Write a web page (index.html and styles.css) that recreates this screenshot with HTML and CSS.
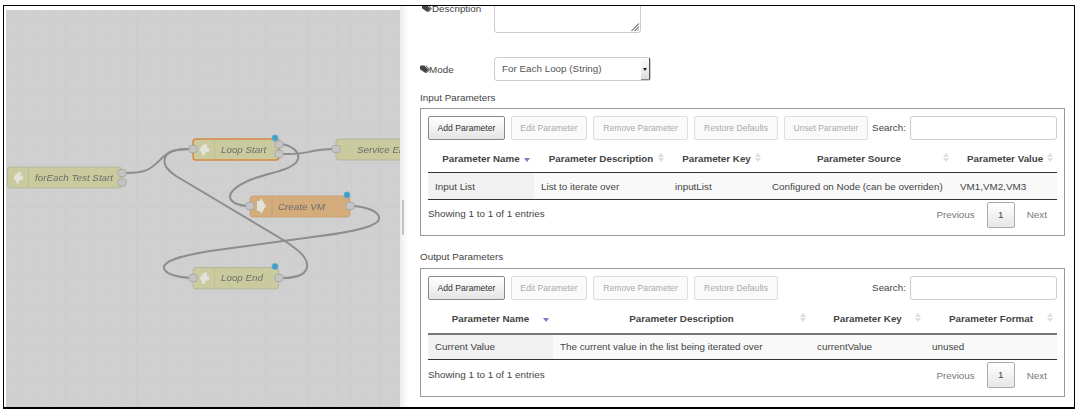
FILE: index.html
```html
<!DOCTYPE html>
<html lang="en">
<head>
  <meta charset="UTF-8">
  <title>Loop Start Node</title>
  <link rel="stylesheet" href="styles.css">
</head>
<body>

<svg class="defs" width="0" height="0">
  <defs>
    <symbol id="tags" viewBox="0 0 12 10">
      <path d="M0 1.2 1 .2h4.2l5 5-3.8 4-6.400-4.600z"/>
      <path d="M6.600.2h1l4.200 5-3.600 4-1-.2 3.400-3.800z"/>
    </symbol>
  </defs>
</svg>

<div class="frame">

  <div class="canvas">
    <svg class="flow" width="394" height="398" viewBox="6 10 394 398">
      <defs>
        <pattern id="grid" x="7.500" y="6" width="14.300" height="14.300" patternUnits="userSpaceOnUse">
          <path d="M0 0V14.300M0 0H14.300" class="grid-line"/>
        </pattern>
        <path id="blob" d="M1 6.500 3 3 7 0 9 2 8 4 11 5 10.500 8 7 9 6 12 4 12 3 9Z"/>
      </defs>
      <rect x="6" y="10" width="394" height="398" fill="url(#grid)"/>

      <!-- wires -->
      <g class="wire">
        <path d="M125 173C148 173 150 169 160 160C168 152 172 149 190 149"/>
        <path d="M282 278C298 278 308 274 307 264C306 256 298 250 285 241L176 176C166 169 163 164 165 158C167 152 174 149 190 149"/>
        <path d="M353 206C368 207 380 212 379 219C378 225 360 231 320 236L210 251C180 256 163 261 164 268C165 274 178 277 191 278"/>
        <path d="M282 144C292 146 300 152 298 159C295 170 270 172 250 180C236 186 230 192 230 197C231 203 240 206 248 206"/>
        <path d="M282 154C315 155 305 149 334 149"/>
      </g>

      <!-- forEach Test Start -->
      <g class="node">
        <rect x="7.500" y="167" width="114" height="21" rx="3"/>
        <path class="node-sep" d="M28.500 167.500V187.500"/>
        <use class="node-icon" href="#blob" x="12.500" y="171.500"/>
        <text x="35" y="181">forEach Test Start</text>
        <rect class="port" x="118" y="169.500" width="8" height="7" rx="2"/>
        <rect class="port" x="118" y="179" width="8" height="7" rx="2"/>
      </g>

      <!-- Loop Start -->
      <g class="node node-selected">
        <rect x="193" y="139" width="86" height="21" rx="3"/>
        <path class="node-sep" d="M214.500 140V159"/>
        <use class="node-icon" href="#blob" x="198.500" y="143.500"/>
        <text x="221" y="153">Loop Start</text>
        <rect class="port" x="189" y="145.500" width="8" height="7" rx="2"/>
        <rect class="port" x="275" y="141" width="8" height="7" rx="2"/>
        <rect class="port" x="275" y="150.500" width="8" height="7" rx="2"/>
        <circle class="badge" cx="275" cy="138" r="3.200"/>
      </g>

      <!-- Service End, cut off by the panel -->
      <g class="node">
        <rect x="336" y="139" width="80" height="21" rx="3"/>
        <text x="357" y="153">Service End</text>
        <rect class="port" x="332" y="145.500" width="8" height="7" rx="2"/>
      </g>

      <!-- Create VM -->
      <g class="node node-orange">
        <rect x="250" y="196" width="100" height="21" rx="3"/>
        <path class="node-sep" d="M272 196.500V216.500"/>
        <path class="node-icon" d="M257 201h3l1-3 5 8-5 8-1-3h-3z"/>
        <text x="278" y="210">Create VM</text>
        <rect class="port" x="246" y="202.500" width="8" height="7" rx="2"/>
        <rect class="port" x="346" y="202.500" width="8" height="7" rx="2"/>
        <circle class="badge" cx="347" cy="195" r="3.200"/>
      </g>

      <!-- Loop End -->
      <g class="node">
        <rect x="193" y="267.500" width="85.500" height="21.500" rx="3"/>
        <path class="node-sep" d="M214.500 268V288.500"/>
        <use class="node-icon" href="#blob" x="198.500" y="272"/>
        <text x="221" y="281">Loop End</text>
        <rect class="port" x="189" y="274.500" width="8" height="7" rx="2"/>
        <rect class="port" x="275" y="274.500" width="8" height="7" rx="2"/>
        <circle class="badge" cx="275" cy="266.500" r="3.200"/>
      </g>
    </svg>
  </div>

  <div class="panel">
    <div class="handle"></div>

    <div class="form-row form-row-cut">
      <label class="form-label"><svg class="tag-icon"><use href="#tags"/></svg><span class="desc-text">Description</span></label>
      <div class="textarea-box"><span class="grip"></span></div>
    </div>

    <div class="form-row form-row-mode">
      <label class="form-label"><svg class="tag-icon"><use href="#tags"/></svg>Mode</label>
      <div class="select-box">
        <span class="select-text">For Each Loop (String)</span>
        <span class="select-arrow"></span>
      </div>
    </div>

    <div class="section-title">Input Parameters</div>
    <div class="param-box">
      <div class="toolbar">
        <button class="btn btn-add btn-active">Add Parameter</button>
        <button class="btn btn-edit">Edit Parameter</button>
        <button class="btn btn-remove">Remove Parameter</button>
        <button class="btn btn-restore">Restore Defaults</button>
        <button class="btn btn-unset">Unset Parameter</button>
        <div class="search"><span>Search:</span><input type="text"></div>
      </div>
      <table class="param-table">
        <colgroup>
          <col class="w106"><col class="w134"><col class="w97"><col class="w188"><col class="w104">
        </colgroup>
        <thead>
          <tr>
            <th class="sort-active">Parameter Name</th>
            <th class="sortable">Parameter Description</th>
            <th class="sortable">Parameter Key</th>
            <th class="sortable">Parameter Source</th>
            <th class="sortable">Parameter Value</th>
          </tr>
        </thead>
        <tbody>
          <tr>
            <td class="sorted">Input List</td>
            <td>List to iterate over</td>
            <td>inputList</td>
            <td>Configured on Node (can be overriden)</td>
            <td>VM1,VM2,VM3</td>
          </tr>
        </tbody>
      </table>
      <div class="table-footer">
        <span>Showing 1 to 1 of 1 entries</span>
        <div class="pager">
          <span class="pager-link">Previous</span>
          <span class="pager-num">1</span>
          <span class="pager-link">Next</span>
        </div>
      </div>
    </div>

    <div class="section-title section-title-gap">Output Parameters</div>
    <div class="param-box">
      <div class="toolbar">
        <button class="btn btn-add btn-active">Add Parameter</button>
        <button class="btn btn-edit">Edit Parameter</button>
        <button class="btn btn-remove">Remove Parameter</button>
        <button class="btn btn-restore">Restore Defaults</button>
        <div class="search"><span>Search:</span><input type="text"></div>
      </div>
      <table class="param-table param-table-output">
        <colgroup>
          <col class="w125"><col class="w257"><col class="w115"><col class="w132">
        </colgroup>
        <thead>
          <tr>
            <th class="sort-active">Parameter Name</th>
            <th class="sortable">Parameter Description</th>
            <th class="sortable">Parameter Key</th>
            <th class="sortable">Parameter Format</th>
          </tr>
        </thead>
        <tbody>
          <tr>
            <td class="sorted">Current Value</td>
            <td>The current value in the list being iterated over</td>
            <td>currentValue</td>
            <td>unused</td>
          </tr>
        </tbody>
      </table>
      <div class="table-footer">
        <span>Showing 1 to 1 of 1 entries</span>
        <div class="pager">
          <span class="pager-link">Previous</span>
          <span class="pager-num">1</span>
          <span class="pager-link">Next</span>
        </div>
      </div>
    </div>
  </div>

</div>

</body>
</html>
```

FILE: styles.css
```css
html, body {
  margin: 0;
  background: white;
  overflow: hidden;
}
body {
  font-family: 'Liberation Sans', Arial, sans-serif;
  font-size: 9.85px;
  color: #444;
}
.defs {
  display: block;
  height: 0;
}

.frame {
  display: flex;
  box-sizing: border-box;
  width: 1072px;
  height: 404px;
  margin: 5px 0 0 3px;
  border: 1px solid black;
  border-bottom-width: 2px;
  overflow: hidden;
}

/* flow canvas */
.canvas {
  flex: none;
  width: 394px;
  height: 398px;
  margin: 4px 0 0 2px;
  background: #d0d0d0;
}
.flow {
  display: block;
  filter: blur(0.35px);
}
.grid-line {
  fill: none;
  stroke: #c9c9c9;
  stroke-width: 0.8;
}
.wire path {
  fill: none;
  stroke: #8d8d8d;
  stroke-width: 2;
}
.node rect {
  fill: #caca9f;
  stroke: #b5b5a0;
  stroke-width: 1;
}
.node .port {
  fill: #c4c4c4;
  stroke: #aaa;
}
.node-selected > rect:first-child {
  stroke: #d8893f;
  stroke-width: 1.5;
}
.node-orange > rect:first-child {
  fill: #d4ab7b;
  stroke: #c9a377;
}
.node-sep {
  stroke: #bdbd96;
  fill: none;
}
.node-orange .node-sep {
  stroke: #c9a070;
}
.node-icon {
  fill: #e2e2d8;
}
.node text {
  font-size: 9.8px;
  font-style: italic;
  fill: #6c6c6c;
}
.node .badge {
  fill: #3f9fc9;
  stroke: #8fb4c4;
  stroke-width: 0.6;
}

/* right panel */
.panel {
  position: relative;
  flex: 1;
  min-width: 0;
  padding-left: 20px;
  background: linear-gradient(to right, #ececec, #f6f6f6 4px, white 9px);
}
.handle {
  position: absolute;
  left: 2px;
  top: 194px;
  width: 2px;
  height: 35px;
  background: #c4c4c4;
}
.form-row {
  display: flex;
}
.form-row-cut {
  margin-top: -13px;
}
.form-row-mode {
  margin-top: 24px;
  align-items: center;
}
.form-label {
  display: flex;
  align-items: center;
  width: 74px;
  height: 14px;
}
.form-row-cut .form-label {
  padding: 8px 0 0 2px;
  width: 72px;
}
.desc-text {
  margin-left: 1px;
}
.tag-icon {
  flex: none;
  width: 10px;
  height: 9px;
  margin-right: -1px;
  fill: #444;
}
.textarea-box {
  position: relative;
  box-sizing: border-box;
  width: 147px;
  height: 40px;
  border: 1px solid #ccc;
  border-radius: 3px;
}
.grip {
  position: absolute;
  right: 1px;
  bottom: 1px;
  width: 9px;
  height: 9px;
  background: repeating-linear-gradient(135deg, transparent 0 1px, #999 1px 2px);
  clip-path: polygon(100% 0, 100% 100%, 0 100%);
}
.select-box {
  display: flex;
  box-sizing: border-box;
  width: 157px;
  height: 24px;
  border: 1px solid #ccc;
  border-radius: 3px;
}
.select-text {
  flex: 1;
  padding-left: 7px;
  line-height: 22px;
  color: #555;
}
.select-arrow {
  position: relative;
  width: 8px;
  background: linear-gradient(to bottom, #fff, #ddd);
  border-right: 1px solid #555;
  border-bottom: 1px solid #888;
}
.select-arrow::after {
  content: "";
  position: absolute;
  left: 2px;
  top: 10px;
  border: 2px solid transparent;
  border-top: 3px solid #222;
  border-bottom: 0;
}

.section-title {
  height: 14px;
  margin: 10px 0 3px;
  line-height: 14px;
}
.section-title-gap {
  margin: 14px 0 4px;
}
.param-box {
  box-sizing: border-box;
  width: 645px;
  padding: 7px;
  border: 1px solid #999;
}
.toolbar {
  display: flex;
  height: 24px;
}
.btn {
  box-sizing: border-box;
  height: 24px;
  margin-right: 6px;
  padding: 0;
  border: 1px solid #ddd;
  border-radius: 2px;
  background: #fafafa;
  font-family: inherit;
  font-size: 8.6px;
  color: #aaa;
  white-space: nowrap;
}
.btn-add { width: 77px; }
.btn-edit { width: 76px; }
.btn-remove { width: 95px; }
.btn-restore { width: 84px; }
.btn-unset {
  width: 84px;
  margin-right: 0;
}
.btn-active {
  border-color: #888;
  background: linear-gradient(to bottom, #fff, #e4e4e4);
  color: #333;
}
.search {
  display: flex;
  align-items: center;
  gap: 4px;
  margin-left: auto;
}
.search span {
  margin-top: -1px;
}
.search input {
  box-sizing: border-box;
  width: 147px;
  height: 24px;
  border: 1px solid #ccc;
  border-radius: 3px;
  outline: none;
}

.param-table {
  table-layout: fixed;
  width: 629px;
  border-collapse: collapse;
}
.w104 { width: 104px; }
.w106 { width: 106px; }
.w97 { width: 97px; }
.w115 { width: 115px; }
.w125 { width: 125px; }
.w132 { width: 132px; }
.w134 { width: 134px; }
.w188 { width: 188px; }
.w257 { width: 257px; }

.param-table th {
  position: relative;
  height: 32px;
  padding: 5px 14px 0;
  box-sizing: border-box;
  border-bottom: 1px solid #333;
  font-size: 9.8px;
  font-weight: bold;
  text-align: center;
  white-space: nowrap;
}
.param-table td {
  box-sizing: border-box;
  height: 27px;
  padding: 1px 7px 0;
  border-bottom: 1px solid #333;
  background: #f9f9f9;
  white-space: nowrap;
}
.param-table td.sorted {
  background: #f1f1f1;
}
.param-table-output th {
  height: 34px;
  padding-top: 4px;
  border-bottom-width: 2px;
  border-bottom-color: #777;
}
.param-table-output td {
  height: 26px;
  padding-top: 0;
}

/* sort markers */
.sortable::before,
.sortable::after,
.sort-active::after {
  content: "";
  position: absolute;
  right: 4px;
  border-left: 3px solid transparent;
  border-right: 3px solid transparent;
}
.sortable::before {
  top: 13px;
  border-bottom: 4px solid #ddd;
}
.sortable::after {
  top: 18px;
  border-top: 4px solid #ddd;
}
.sort-active::after {
  top: 18px;
  border-top: 4px solid #7c7cc4;
}

.table-footer {
  display: flex;
  justify-content: space-between;
  height: 28px;
}
.param-table-output + .table-footer {
  height: 29px;
}
.table-footer > span {
  margin-top: 8px;
}
.param-table-output + .table-footer > span {
  margin-top: 9px;
}
.pager {
  display: flex;
  align-items: center;
  height: 26px;
  margin-top: 2px;
  padding-right: 10px;
  color: #777;
}
.pager-num {
  box-sizing: border-box;
  width: 28px;
  height: 26px;
  margin: 0 12px 0 12px;
  border: 1px solid #aaa;
  border-radius: 2px;
  background: linear-gradient(to bottom, #fff, #e6e6e6);
  line-height: 24px;
  text-align: center;
  color: #444;
}
```
